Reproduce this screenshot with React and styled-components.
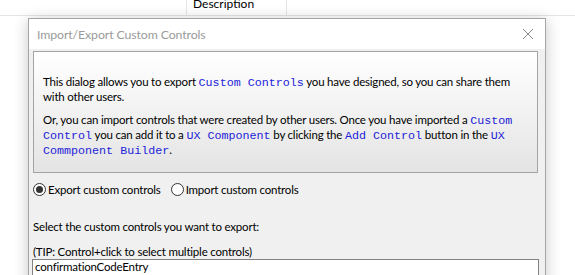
import React from 'react';
import styled, { createGlobalStyle } from 'styled-components';

const GlobalStyle = createGlobalStyle`
  html, body {
    margin: 0;
    padding: 0;
    background: #fff;
  }
  body {
    font-family: Lato, "Liberation Sans", sans-serif;
  }
`;

const Desktop = styled.div`
  position: relative;
  width: 575px;
  height: 275px;
  overflow: hidden;
  background: #fff;
`;

const GridHeader = styled.div`
  display: flex;
  height: 22px;
  margin-top: -7px;
  border-bottom: 1px solid #e5e5e5;
`;

const HeaderCell = styled.div`
  width: ${({ w }) => w}px;
  box-sizing: border-box;
  padding-left: 6px;
  border-right: 1px solid #e5e5e5;
  font-size: 12px;
  line-height: 22px;
  color: #000;
`;

const Dialog = styled.div`
  position: absolute;
  left: 28px;
  top: 18px;
  width: 518px;
  height: 300px;
  box-sizing: border-box;
  border: 1px solid #a5a5a5;
  background: #f0f0f0;
  box-shadow: 0 2px 14px rgba(0, 0, 0, 0.22);
  display: flex;
  flex-direction: column;
`;

const TitleBar = styled.div`
  height: 31px;
  background: #fff;
  display: flex;
  align-items: center;
  justify-content: space-between;
  padding: 0 2px 0 8px;
`;

const Title = styled.div`
  font-size: 12.3px;
  letter-spacing: -0.1px;
  color: #9a9a9a;
`;

const CloseBox = styled.div`
  width: 30px;
  height: 30px;
  display: flex;
  align-items: center;
  justify-content: center;
`;

const Body = styled.div`
  padding: 2px 7px 0 4px;
  display: flex;
  flex-direction: column;
`;

const InfoPanel = styled.div`
  border: 1px solid #a3a3a3;
  background: linear-gradient(to bottom, #ffffff 0%, #f3f3f3 45%, #e4e4e4 100%);
  padding: 23px 10px 19px 9px;
  height: 122px;
  box-sizing: border-box;
`;

const Para = styled.p`
  margin: 0 0 ${({ last }) => (last ? 0 : 9)}px 0;
  font-size: 11.5px;
  letter-spacing: -0.2px;
  line-height: 14px;
  white-space: nowrap;
  color: #000;
`;

const Code = styled.span`
  font-family: "Liberation Mono", "Courier New", monospace;
  font-size: 11.7px;
  letter-spacing: 0;
  color: #2323d8;
`;

const RadioRow = styled.div`
  display: flex;
  align-items: center;
  height: 30px;
  margin-top: 1px;
`;

const RadioLabel = styled.label`
  display: flex;
  align-items: center;
  gap: 2px;
  font-size: 11.5px;
  letter-spacing: -0.2px;
  color: #000;
  margin-right: 10px;
`;

const RadioCircle = styled.span`
  width: 13px;
  height: 13px;
  box-sizing: border-box;
  border-radius: 50%;
  border: 1px solid #333;
  background: #fff;
  display: flex;
  align-items: center;
  justify-content: center;
  &::after {
    content: '';
    width: 7px;
    height: 7px;
    border-radius: 50%;
    background: ${({ checked }) => (checked ? '#333' : 'transparent')};
  }
`;

const Prompt = styled.div`
  font-size: 11.5px;
  letter-spacing: -0.2px;
  line-height: 14px;
  color: #000;
  margin-top: ${({ gap }) => gap}px;
`;

const ListBox = styled.div`
  margin-left: -1px;
  margin-right: -1px;
  border: 1px solid #828282;
  background: #fff;
  height: 80px;
  padding: 0 2px;
`;

const ListItem = styled.div`
  font-size: 11.5px;
  letter-spacing: -0.2px;
  line-height: 13px;
  color: #000;
`;

export default function App() {
  return (
    <>
      <GlobalStyle />
      <Desktop>
        <GridHeader>
          <HeaderCell w={187} />
          <HeaderCell w={100}>Description</HeaderCell>
        </GridHeader>

        <Dialog>
          <TitleBar>
            <Title>Import/Export Custom Controls</Title>
            <CloseBox>
              <svg width="12" height="12" viewBox="0 0 12 12">
                <path d="M1 1L11 11M11 1L1 11" stroke="#8a8a8a" strokeWidth="1" fill="none" />
              </svg>
            </CloseBox>
          </TitleBar>

          <Body>
            <InfoPanel>
              <Para>
                This dialog allows you to export <Code>Custom Controls</Code> you have designed, so you can share them
                <br />
                with other users.
              </Para>
              <Para last>
                Or, you can import controls that were created by other users. Once you have imported a <Code>Custom</Code>
                <br />
                <Code>Control</Code> you can add it to a <Code>UX Component</Code> by clicking the <Code>Add Control</Code> button in the <Code>UX</Code>
                <br />
                <Code>Commponent Builder</Code>.
              </Para>
            </InfoPanel>

            <RadioRow>
              <RadioLabel>
                <RadioCircle checked />
                Export custom controls
              </RadioLabel>
              <RadioLabel>
                <RadioCircle />
                Import custom controls
              </RadioLabel>
            </RadioRow>

            <Prompt gap={16}>Select the custom controls you want to export:</Prompt>
            <Prompt gap={11}>(TIP: Control+click to select multiple controls)</Prompt>

            <ListBox>
              <ListItem>confirmationCodeEntry</ListItem>
              <ListItem>checkboxList</ListItem>
            </ListBox>
          </Body>
        </Dialog>
      </Desktop>
    </>
  );
}
